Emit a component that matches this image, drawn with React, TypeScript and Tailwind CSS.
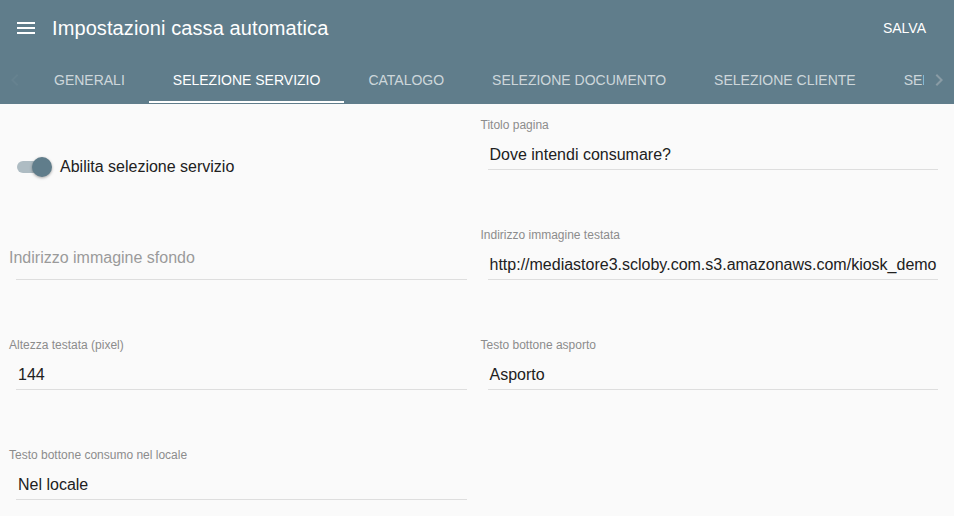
import { useState } from 'react';

interface FieldProps {
  label?: string;
  value?: string;
  placeholder?: string;
}

const tabs = [
  'Generali',
  'Selezione servizio',
  'Catalogo',
  'Selezione documento',
  'Selezione cliente',
  'Selezione pagamento',
];

function Field({ label, value, placeholder }: FieldProps) {
  if (placeholder) {
    return (
      <div className="h-[110px] pt-[36px]">
        <div className="relative h-[30px] border-b border-[#dedede]">
          <span className="absolute left-[-7px] top-[-7px] text-[16px] leading-[30px] text-[#9a9a9a]">
            {placeholder}
          </span>
        </div>
      </div>
    );
  }
  return (
    <div className="h-[110px] pt-[14px]">
      <div className="-ml-[7px] text-[12px] leading-[14px] text-[#8c8c8c]">{label}</div>
      <div className="mt-[8px] h-[30px] whitespace-nowrap overflow-hidden border-b border-[#dedede] pl-[2px] text-[16px] leading-[30px] text-[#212121]">
        {value}
      </div>
    </div>
  );
}

export default function App() {
  const [active, setActive] = useState(1);
  const [enabled, setEnabled] = useState(true);

  return (
    <div className="h-screen overflow-hidden bg-[#fafafa] font-['Liberation_Sans',Arial,sans-serif]">
      <header className="bg-[#607d8b] text-white">
        <div className="flex h-[56px] items-center pl-[14px] pr-[28px]">
          <svg className="h-6 w-6" viewBox="0 0 24 24" fill="currentColor">
            <path d="M3 18h18v-2H3v2zm0-5h18v-2H3v2zm0-7v2h18V6H3z" />
          </svg>
          <h1 className="ml-[14px] flex-1 text-[20px] font-normal tracking-[0.1px]">Impostazioni cassa automatica</h1>
          <button className="text-[14px] uppercase">Salva</button>
        </div>
        <div className="flex h-[48px]">
          <div className="flex w-[30px] shrink-0 items-center justify-center text-white/[0.04]">
            <svg className="h-6 w-6" viewBox="0 0 24 24" fill="currentColor">
              <path d="M15.41 16.59L10.83 12l4.58-4.59L14 6l-6 6 6 6 1.41-1.41z" />
            </svg>
          </div>
          <nav className="flex flex-1 overflow-hidden">
            {tabs.map((t, i) => (
              <button
                key={t}
                onClick={() => setActive(i)}
                className={`relative shrink-0 whitespace-nowrap px-6 text-[14px] uppercase ${
                  i === active ? 'text-white' : 'text-white/70'
                }`}
              >
                {t}
                {i === active && <span className="absolute bottom-[1px] left-0 right-0 h-[2px] bg-white" />}
              </button>
            ))}
          </nav>
          <div className="flex w-[30px] shrink-0 items-center justify-center text-[#8a9ca5]">
            <svg className="h-6 w-6" viewBox="0 0 24 24" fill="currentColor">
              <path d="M8.59 16.59L13.17 12 8.59 7.41 10 6l6 6-6 6-1.41-1.41z" />
            </svg>
          </div>
        </div>
      </header>

      <main className="grid grid-cols-2 gap-x-[21px] px-4">
        <div className="h-[110px] pt-[53px]">
          <label className="flex h-[20px] cursor-pointer items-center" onClick={() => setEnabled(!enabled)}>
            <div className="relative ml-[1px] h-[20px] w-[35px]">
              <div className={`absolute left-0 top-[4px] h-[12px] w-[31px] rounded-full ${enabled ? 'bg-[#aebcc3]' : 'bg-[#bdbdbd]'}`} />
              <div
                className={`absolute top-0 h-[20px] w-[20px] rounded-full shadow-[0_1px_3px_rgba(0,0,0,0.35)] ${
                  enabled ? 'left-[15px] bg-[#607d8b]' : 'left-0 bg-[#f1f1f1]'
                }`}
              />
            </div>
            <span className="ml-[8px] text-[16px] text-[#212121]">Abilita selezione servizio</span>
          </label>
        </div>
        <Field label="Titolo pagina" value="Dove intendi consumare?" />

        <Field placeholder="Indirizzo immagine sfondo" />
        <Field label="Indirizzo immagine testata" value="http://mediastore3.scloby.com.s3.amazonaws.com/kiosk_demo" />

        <Field label="Altezza testata (pixel)" value="144" />
        <Field label="Testo bottone asporto" value="Asporto" />

        <Field label="Testo bottone consumo nel locale" value="Nel locale" />
      </main>
    </div>
  );
}
